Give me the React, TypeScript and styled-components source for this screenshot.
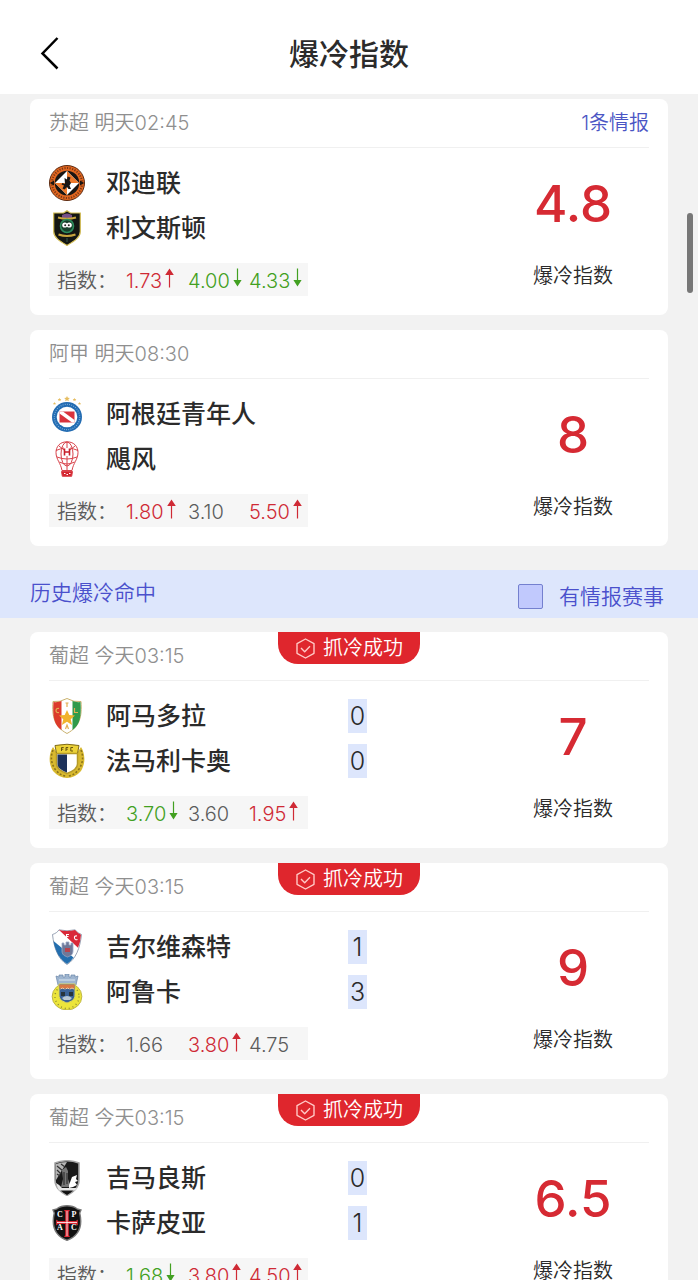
import type { ReactNode } from 'react';
import styled, { createGlobalStyle } from 'styled-components';

const GlobalStyle = createGlobalStyle`
  * {
    box-sizing: border-box;
  }

  body {
    margin: 0;
    background: #f2f2f2;
    color: #2b2b2b;
    font-family: Inter, 'Noto Sans CJK SC', sans-serif;
    font-weight: 350;
    font-size: 20px;
    line-height: 30px;
  }
`;

const Page = styled.div`
  display: flex;
  flex-direction: column;
  height: 100vh;
`;

const Header = styled.header`
  display: grid;
  grid-template-columns: 1fr auto 1fr;
  align-items: center;
  flex: none;
  height: 94px;
  padding: 14px 36px 0;
  background: #fff;
`;

const BackButton = styled.button`
  display: flex;
  width: 28px;
  padding: 0;
  border: 0;
  background: none;
  cursor: pointer;
`;

const Title = styled.h1`
  margin: 0;
  font-size: 30px;
  line-height: 40px;
  font-weight: 500;
`;

const Scroller = styled.main`
  flex: 1;
  min-height: 0;
  overflow-y: auto;
  scrollbar-width: none;
`;

const ScrollThumb = styled.div`
  position: fixed;
  top: 213px;
  right: 5px;
  width: 6px;
  height: 80px;
  border-radius: 3px;
  background: #777;
`;

const CardList = styled.section<{ $top: number }>`
  display: flex;
  flex-direction: column;
  gap: 15px;
  padding: ${({ $top }) => $top}px 30px 24px;
`;

const Card = styled.article`
  height: 216px;
  padding: 0 19px;
  border-radius: 8px;
  background: #fff;
`;

const CardHead = styled.div`
  display: grid;
  grid-template-columns: 1fr auto 1fr;
  height: 49px;
  border-bottom: 1px solid #f0f0f0;
`;

const League = styled.span`
  padding-top: 9px;
  color: #8f8f8f;
`;

const IntelLink = styled.a`
  grid-column: 3;
  justify-self: end;
  padding-top: 9px;
  color: #4a55c4;
  text-decoration: none;
`;

const Badge = styled.span`
  grid-column: 2;
  display: flex;
  align-items: center;
  justify-content: center;
  gap: 7px;
  width: 142px;
  height: 32px;
  border-radius: 0 0 20px 20px;
  background: #df262d;
  color: #fff;
`;

const CardBody = styled.div`
  display: flex;
`;

const Match = styled.div`
  flex: 1;
  padding-top: 12px;
`;

const Team = styled.div`
  display: flex;
  align-items: center;
  height: 45px;
`;

const Crest = styled.svg`
  flex: none;
  width: 36px;
  height: 36px;
`;

const TeamName = styled.span`
  flex: 1;
  padding-left: 21px;
  font-size: 25px;
  font-weight: 500;
`;

const Goals = styled.span`
  width: 19px;
  background: #dde6fc;
  font-size: 25px;
  line-height: 34px;
  text-align: center;
`;

const Odds = styled.div`
  display: grid;
  grid-template-columns: 69px 62px 61px 1fr;
  align-items: center;
  width: 259px;
  height: 33px;
  margin-top: 13px;
  padding: 2px 0 0 8px;
  background: #f6f6f6;
  color: #5c5c5c;
`;

const Odd = styled.span<{ $trend?: Trend }>`
  display: flex;
  gap: 3px;
  color: ${({ $trend }) =>
    $trend === 'up' ? '#cf2a35' : $trend === 'down' ? '#42a021' : '#5c5c5c'};
`;

const Rating = styled.div`
  width: 152px;
  margin-left: 130px;
  padding-top: 24px;
  text-align: center;
`;

const RatingValue = styled.div`
  margin-bottom: 25px;
  color: #d62a33;
  font-size: 51px;
  line-height: 64px;
  font-weight: 500;
`;

const SectionBar = styled.div`
  display: flex;
  justify-content: space-between;
  height: 48px;
  padding: 0 34px 0 30px;
  background: #dde6fc;
  color: #4a50cc;
  font-size: 21px;
`;

const SectionTitle = styled.h2`
  margin: 0;
  padding-top: 8px;
  font-size: inherit;
  font-weight: inherit;
`;

const Filter = styled.label`
  display: flex;
  align-items: center;
  gap: 16px;
  padding-top: 5px;
`;

const Checkbox = styled.input`
  appearance: none;
  width: 25px;
  height: 25px;
  margin: 0;
  border: 1px solid #7480cf;
  border-radius: 2px;
  background: #c1c9fd;

  &:checked {
    background: #4a55c4;
  }
`;

type Trend = 'up' | 'down';

interface ITeam {
  name: string;
  crest: ReactNode;
  goals?: number;
}

interface IMatch {
  league: string;
  intel?: string;
  hit?: boolean;
  teams: ITeam[];
  odds: [string, Trend?][];
  rating: string;
}

const crests = {
  dundee: (
    <>
      <circle cx="18" cy="18" r="17.5" fill="#e2661f" stroke="#5a2a12" strokeWidth="1" />
      <path id="dundee-top" d="M5 18a13 13 0 0 1 26 0" fill="none" />
      <circle cx="18" cy="18" r="15" fill="none" stroke="#7a3817" strokeWidth="2" strokeDasharray="1.2 1.4" />
      <circle cx="18" cy="18" r="12.3" fill="#1b1613" />
      <path d="M.8 18l4.200-2.500v5zM35.200 18L31 15.500v5z" fill="#1b1613" />
      <path d="M18 6L30 18 18 30 6 18z" fill="#fff" />
      <path d="M18 6L30 18H18zM18 30L6 18h12z" fill="#ee7a2c" />
      <path d="M15.500 13l2.500 1.500.5-3 3 1-1 3 1.500 2.500-1.500 2.500 1.500 3.500h-2.500L18 22l-2.500 2.500-2-1 1.500-3-2.500-1 1-1.500 2.500 1z" fill="#1b1613" />
    </>
  ),
  livingston: (
    <>
      <path d="M18 .8L21.500 3h9.800v18.500c0 6-6 9.500-13.300 14-7.300-4.500-13.300-8-13.300-14V3h9.800z" fill="#141613" stroke="#d3bd55" strokeWidth="1.2" />
      <path d="M13 5q5-3 10 0v3H13z" fill="#76508a" />
      <path d="M9 7.500q9 2.500 18 0M9.500 24.500q8.500 3 17 0" fill="none" stroke="#c9a53e" strokeWidth="2.2" />
      <circle cx="18" cy="16" r="6.500" fill="#173f2b" stroke="#2d8b5c" strokeWidth="1.6" />
      <circle cx="15.800" cy="15" r="2.600" fill="#fff" />
      <circle cx="20.200" cy="15" r="2.600" fill="#fff" />
      <circle cx="16.200" cy="15.200" r="1" fill="#222" />
      <circle cx="19.800" cy="15.200" r="1" fill="#222" />
      <path d="M18 28v4" stroke="#3a5949" strokeWidth="1" />
    </>
  ),
  argentinos: (
    <>
      <path d="M18 0l.9 1.700 2 .2-1.500 1.400.4 2-1.800-1-1.800 1 .4-2-1.500-1.400 2-.2z" fill="#e5bd61" />
      <path d="M10.500 2l.6 1 1.200.1-.9.9.2 1.200-1.100-.6-1.100.6.2-1.200-.9-.9 1.200-.1zM25.500 2l.6 1 1.200.1-.9.9.2 1.200-1.100-.6-1.100.6.2-1.200-.9-.9 1.200-.1zM5.500 6l.5.9 1 .1-.7.7.2 1-1-.5-1 .5.2-1-.7-.7 1-.1zM30.500 6l.5.9 1 .1-.7.7.2 1-1-.5-1 .5.2-1-.7-.7 1-.1z" fill="#e5bd61" />
      <circle cx="18" cy="21" r="15" fill="#236cb2" />
      <circle cx="18" cy="21" r="12.700" fill="none" stroke="#7fb0dc" strokeWidth="1.2" strokeDasharray=".9 1.300" />
      <circle cx="18" cy="21" r="10.300" fill="#fff" />
      <path d="M10.500 15.500h15v11h-15z" fill="#d9333d" />
      <path d="M10.500 15.500H14l11.500 8.500v2.500H23l-12.500-9z" fill="#fff" />
    </>
  ),
  huracan: (
    <g fill="none" stroke="#d84149" strokeWidth="1">
      <path d="M18 .8C10.500.8 7 6 7 11.500c0 7 4.800 10.500 6 18h10c1.200-7.500 6-11 6-18C29 6 25.500.8 18 .8z" />
      <ellipse cx="18" cy="13" rx="6" ry="12" />
      <path d="M18 1v6M18 15v14M7 9.500q5-2 8-2.500M29 9.500q-5-2-8-2.500M8 16q10 4 20 0M10.500 21q7.500 4 15 0M10 5l5 4M26 5l-5 4" />
      <path d="M15.500 7.500v7M20.500 7.500v7M15.500 11h5" stroke="#c7202b" strokeWidth="1.6" />
      <path d="M12.500 30.500h11l-.8 4.800h-9.400z" fill="#d5232e" />
      <path d="M15 32.500h1.500M17.500 33.500H19M20 32.500h1.500" stroke="#fff" />
    </g>
  ),
  amadora: (
    <>
      <path d="M4 3.500q7 1 14-3 7 4 14 3c1 15-1 25-14 32C5 28.500 3 18.500 4 3.500z" fill="#fff" stroke="#c9b16d" strokeWidth="1" />
      <path d="M4.500 4q4.500.5 8-1v29C5 27 3.500 18 4.500 4z" fill="#dc3b2b" />
      <path d="M31.500 4q-4.500.5-8-1v29c7.500-5 9-14 8-28z" fill="#2f9a4a" />
      <path d="M18 12l2.300 5 5.700.6-4.300 3.700 1.400 5.700-5.100-3.200-5.100 3.200 1.400-5.700-4.300-3.700 5.700-.6z" fill="#f1b32c" />
      <path d="M10 10.500q-3-.5-3 2t3 2M25.500 10v4.500H29M16.500 5h3M18 5v4M16.500 31l1.500-4 1.500 4" fill="none" stroke="#e2ae52" strokeWidth="1.2" />
    </>
  ),
  famalicao: (
    <>
      <path d="M4 4C0 10-1 20 4 28q6 7 14 7t14-7c5-8 4-18 0-24l-4 6H8z" fill="#d8b92f" />
      <path d="M4 7q-4 10 2 19 5 7 12 7M32 7q4 10-2 19-5 7-12 7" fill="none" stroke="#8b741b" strokeWidth="1.6" strokeDasharray="2 1.800" />
      <path d="M6 2.500q12-2.500 24 0l-1.500 8h-21z" fill="#ecd238" stroke="#806b18" strokeWidth="1" />
      <path d="M12.500 8V4.500h2.200M12.500 6.200h1.800M17 8V4.500h2.200M17 6.200h1.800M24 4.500h-2.200V8H24" fill="none" stroke="#69570f" strokeWidth="1" />
      <path d="M7.500 10.500h21V21c0 5-5 7.500-10.500 9.500C12.500 28.500 7.500 26 7.500 21z" fill="#fff" stroke="#b59a27" strokeWidth="1.5" />
      <path d="M8.500 11.500H18v18C13 27.500 8.500 25 8.500 21z" fill="#1c3159" />
    </>
  ),
  gil: (
    <>
      <path d="M10 .8q8 2 16 0 3 3.500 6.500 4.700C31 19 27 30 18 35.500 9 30 5 19 3.500 5.500 7 4.300 8.500 3 10 .8z" fill="#fff" stroke="#7f8ba2" strokeWidth=".8" />
      <path d="M10 1q8 2 16 0 3 3.500 6 4.700-.5 7-3 13z" fill="#d92839" />
      <path d="M4.500 12l20 16.500q-2.500 4-6.500 6.500C10.500 30 6 22 4.500 12z" fill="#236eae" />
      <path d="M17.500 9.500v-4H20M17.500 7.500h2M28 7q-3-.5-2.500 2t3 1.500" fill="none" stroke="#fff" strokeWidth="1.1" />
      <path d="M13 14h2v2h2v-3h3v3h2v-2h2v8c0 4-3 5-5.500 6-2.500-1-5.500-2-5.500-6z" fill="#6f7898" stroke="#9baac8" strokeWidth=".8" />
      <path d="M16 19h5v4h-5z" fill="#b8444e" />
    </>
  ),
  arouca: (
    <>
      <circle cx="18" cy="22.500" r="13.500" fill="#ece53b" stroke="#b5ad3e" strokeWidth=".8" transform="translate(-1.800) scale(1.1 1)" />
      <circle cx="18" cy="22.500" r="12" fill="none" stroke="#8f8c34" strokeWidth="1.4" strokeDasharray="1 3" />
      <path d="M7 2l3 1V1h4v2h2V0h4v3h2V1h4v2l3-1-2 9H9z" fill="#9eb5d0" stroke="#6b87a9" strokeWidth=".7" />
      <path d="M10 6h16" stroke="#dbe6f0" strokeWidth="1" />
      <path d="M10 10h16v11c0 5-4 6.500-8 8-4-1.500-8-3-8-8z" fill="#3a6296" stroke="#ddd65c" strokeWidth="1" />
      <path d="M10.500 10.500h15v4h-15z" fill="#d77846" />
      <path d="M11.500 15q2-2 4 0M16.500 15q2-2 4 0M21 15q2-2 4 0" fill="none" stroke="#f7ca9c" strokeWidth="1" />
      <path d="M12 18h4v4h-4zM20 18h4v4h-4z" fill="#27343b" />
      <path d="M13 24q5-4 10 0l-2 2h-6z" fill="#b8c8d5" />
    </>
  ),
  guimaraes: (
    <>
      <path d="M6 3Q18-1.500 30 3v17c0 8-6 12-12 15.500C12 32 6 28 6 20z" fill="#191919" stroke="#a5a5a5" strokeWidth="1.6" />
      <path d="M7 4q5-2 11-2L7 20z" fill="#b5b5b5" />
      <path d="M8 6l6 5M8 10l4 4M12 4l4 3M8 14l3 2" stroke="#333" strokeWidth="1.2" />
      <path d="M13 10l4-3 2 4v8l3 8H12l2-8z" fill="#777" />
      <path d="M15 12v13M18 13v11" stroke="#222" strokeWidth="1" />
      <path d="M20 25l3-8 5-2-1 4 2 2-3 1 2 3-4 2-4 1z" fill="#fff" />
      <path d="M7 23q4 2 6 5h15l-2 2.500H10Q8 27 7 23z" fill="#e6e6e6" />
      <path d="M12 31q6 2 12 0l-6 4z" fill="#111" />
    </>
  ),
  casaPia: (
    <>
      <path d="M18 .8q6 0 10 3l4 1.200-1.300 3C34 22 29 31 18 35.300 7 31 2 22 5.300 8L4 5l4-1.200q4-3 10-3z" fill="#111" stroke="#777" strokeWidth="1.4" />
      <path d="M15 5h6l-1.200 2v9h7l2-1.500v6L26.800 19h-7v11l1.200 2h-6l1.200-2V19h-7l-2 1.500v-6L9.200 16h7V7z" fill="#da2734" />
      <path d="M18 6v25M8 17.500h20" stroke="#fff" strokeWidth=".8" />
      <g fill="#fff" fontFamily="Liberation Serif, serif" fontSize="8" fontWeight="700" textAnchor="middle">
        <text x="11" y="12">C</text>
        <text x="25" y="12">P</text>
        <text x="11" y="25">A</text>
        <text x="25" y="25">C</text>
      </g>
    </>
  ),
};

const upcoming: IMatch[] = [
  {
    league: '苏超 明天02:45',
    intel: '1条情报',
    teams: [
      { name: '邓迪联', crest: crests.dundee },
      { name: '利文斯顿', crest: crests.livingston },
    ],
    odds: [['1.73', 'up'], ['4.00', 'down'], ['4.33', 'down']],
    rating: '4.8',
  },
  {
    league: '阿甲 明天08:30',
    teams: [
      { name: '阿根廷青年人', crest: crests.argentinos },
      { name: '飓风', crest: crests.huracan },
    ],
    odds: [['1.80', 'up'], ['3.10'], ['5.50', 'up']],
    rating: '8',
  },
];

const history: IMatch[] = [
  {
    league: '葡超 今天03:15',
    hit: true,
    teams: [
      { name: '阿马多拉', crest: crests.amadora, goals: 0 },
      { name: '法马利卡奥', crest: crests.famalicao, goals: 0 },
    ],
    odds: [['3.70', 'down'], ['3.60'], ['1.95', 'up']],
    rating: '7',
  },
  {
    league: '葡超 今天03:15',
    hit: true,
    teams: [
      { name: '吉尔维森特', crest: crests.gil, goals: 1 },
      { name: '阿鲁卡', crest: crests.arouca, goals: 3 },
    ],
    odds: [['1.66'], ['3.80', 'up'], ['4.75']],
    rating: '9',
  },
  {
    league: '葡超 今天03:15',
    hit: true,
    teams: [
      { name: '吉马良斯', crest: crests.guimaraes, goals: 0 },
      { name: '卡萨皮亚', crest: crests.casaPia, goals: 1 },
    ],
    odds: [['1.68', 'down'], ['3.80', 'up'], ['4.50', 'up']],
    rating: '6.5',
  },
];

function TrendArrow({ trend }: { trend: Trend }) {
  return (
    <svg width="9" height="24" viewBox="0 0 9 24" fill="currentColor">
      {trend === 'up' ? (
        <path d="M4.500 2.500L8.800 9H5.100v12.500H3.900V9H.2z" />
      ) : (
        <path d="M3.900 2.500h1.200V14h3.500l-4.100 6.500L.4 14h3.500z" />
      )}
    </svg>
  );
}

function MatchCard({ match }: { match: IMatch }) {
  return (
    <Card>
      <CardHead>
        <League>{match.league}</League>
        {match.hit && (
          <Badge>
            <svg width="21" height="21" viewBox="0 0 21 21" fill="none" stroke="#ffc9c6" strokeWidth="1.4" strokeLinejoin="round">
              <path d="M10.500 1L19 5.700v9.600L10.500 20 2 15.300V5.700z" />
              <path d="M6 10l3.700 3.700L15 8.300" />
            </svg>
            抓冷成功
          </Badge>
        )}
        {match.intel && <IntelLink href="#intel">{match.intel}</IntelLink>}
      </CardHead>
      <CardBody>
        <Match>
          {match.teams.map(({ name, crest, goals }) => (
            <Team key={name}>
              <Crest viewBox="0 0 36 36">{crest}</Crest>
              <TeamName>{name}</TeamName>
              {goals !== undefined && <Goals>{goals}</Goals>}
            </Team>
          ))}
          <Odds>
            <span>指数：</span>
            {match.odds.map(([value, trend], i) => (
              <Odd key={i} $trend={trend}>
                {value}
                {trend && <TrendArrow trend={trend} />}
              </Odd>
            ))}
          </Odds>
        </Match>
        <Rating>
          <RatingValue>{match.rating}</RatingValue>
          爆冷指数
        </Rating>
      </CardBody>
    </Card>
  );
}

export default function App() {
  return (
    <Page>
      <GlobalStyle />
      <Header>
        <BackButton aria-label="返回">
          <svg width="28" height="36" viewBox="0 0 28 36" fill="none" stroke="#000" strokeWidth="2.5">
            <path d="M21.500 2L6.500 17.500l15 15" />
          </svg>
        </BackButton>
        <Title>爆冷指数</Title>
      </Header>
      <Scroller>
        <CardList $top={5}>
          {upcoming.map((match, i) => (
            <MatchCard key={i} match={match} />
          ))}
        </CardList>
        <SectionBar>
          <SectionTitle>历史爆冷命中</SectionTitle>
          <Filter>
            <Checkbox type="checkbox" />
            有情报赛事
          </Filter>
        </SectionBar>
        <CardList $top={14}>
          {history.map((match, i) => (
            <MatchCard key={i} match={match} />
          ))}
        </CardList>
      </Scroller>
      <ScrollThumb />
    </Page>
  );
}
